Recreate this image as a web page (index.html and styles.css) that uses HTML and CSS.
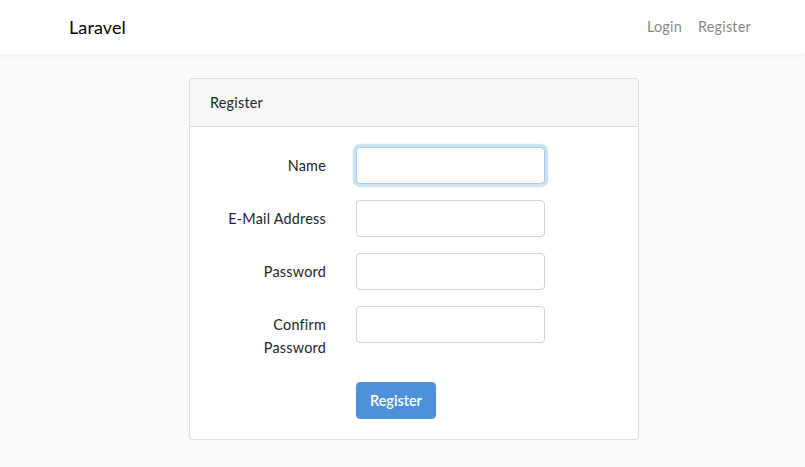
FILE: index.html
```html
<!DOCTYPE html>
<html lang="en">
<head>
<meta charset="utf-8">
<title>Laravel</title>
<link rel="stylesheet" href="styles.css">
</head>
<body>
<nav class="navbar">
  <div class="container nav-inner">
    <a class="brand" href="#">Laravel</a>
    <ul class="nav-links">
      <li><a class="nav-link" href="#">Login</a></li>
      <li><a class="nav-link" href="#">Register</a></li>
    </ul>
  </div>
</nav>
<main class="main">
  <div class="container">
    <div class="card">
      <div class="card-header">Register</div>
      <div class="card-body">
        <form class="form">
          <div class="form-group">
            <label class="label" for="name">Name</label>
            <div class="field"><input id="name" class="input focused" type="text"></div>
          </div>
          <div class="form-group">
            <label class="label" for="email">E-Mail Address</label>
            <div class="field"><input id="email" class="input" type="email"></div>
          </div>
          <div class="form-group">
            <label class="label" for="password">Password</label>
            <div class="field"><input id="password" class="input" type="password"></div>
          </div>
          <div class="form-group">
            <label class="label" for="password-confirm">Confirm Password</label>
            <div class="field"><input id="password-confirm" class="input" type="password"></div>
          </div>
          <div class="form-group last">
            <div class="label"></div>
            <div class="field"><button type="button" class="btn">Register</button></div>
          </div>
        </form>
      </div>
    </div>
  </div>
</main>
</body>
</html>
```
FILE: styles.css
```css
* { box-sizing: border-box; }
html, body { margin: 0; padding: 0; }
body {
  background: #f8fafc;
  color: #212529;
  font-family: "Lato", "Open Sans", sans-serif;
  font-size: 14.4px;
  line-height: 1.6;
  letter-spacing: 0.22px;
}
.container {
  width: 690px;
  margin-left: 69px;
}
.navbar {
  background: #fff;
  box-shadow: 0 2px 4px rgba(0, 0, 0, 0.04);
  padding: 7px 0 9px;
  height: 54px;
}
.nav-inner {
  display: flex;
  align-items: center;
  justify-content: space-between;
}
.brand {
  font-size: 18px;
  line-height: 28px;
  padding: 5px 0;
  color: #000;
  text-decoration: none;
  display: inline-block;
  letter-spacing: 0.1px;
}
.nav-links {
  list-style: none;
  margin: 0;
  padding: 0;
  display: flex;
}
.nav-link {
  display: block;
  padding: 8px;
  color: rgba(0, 0, 0, 0.5);
  text-decoration: none;
}
.main {
  padding: 24px 0;
}
.card {
  width: 450px;
  margin-left: 120px;
  background: #fff;
  border: 1px solid rgba(0, 0, 0, 0.125);
  border-radius: 4px;
}
.card-header {
  padding: 12px 20px;
  background: rgba(0, 0, 0, 0.03);
  border-bottom: 1px solid rgba(0, 0, 0, 0.125);
  border-radius: 3px 3px 0 0;
}
.card-body {
  padding: 20px 5px;
}
.form-group {
  display: flex;
  margin-bottom: 16px;
}
.form-group.last { margin-bottom: 0; }
.label {
  width: 146px;
  padding: 7px 15px;
  text-align: right;
}
.field {
  width: 219px;
  padding: 0 15px;
}
.input {
  display: block;
  width: 100%;
  height: 37px;
  padding: 6px 12px;
  font: inherit;
  color: #495057;
  background: #fff;
  border: 1px solid #ced4da;
  border-radius: 4px;
  outline: none;
}
.input.focused {
  border-color: #a1cbef;
  box-shadow: 0 0 0 3.2px rgba(52, 144, 220, 0.25);
}
.btn {
  display: inline-block;
  width: 80px;
  height: 37px;
  padding: 6px 0;
  font: inherit;
  font-weight: 600;
  text-align: center;
  color: #fff;
  background: #4d92d9;
  border: 1px solid #4d92d9;
  border-radius: 4px;
  cursor: pointer;
}
```
